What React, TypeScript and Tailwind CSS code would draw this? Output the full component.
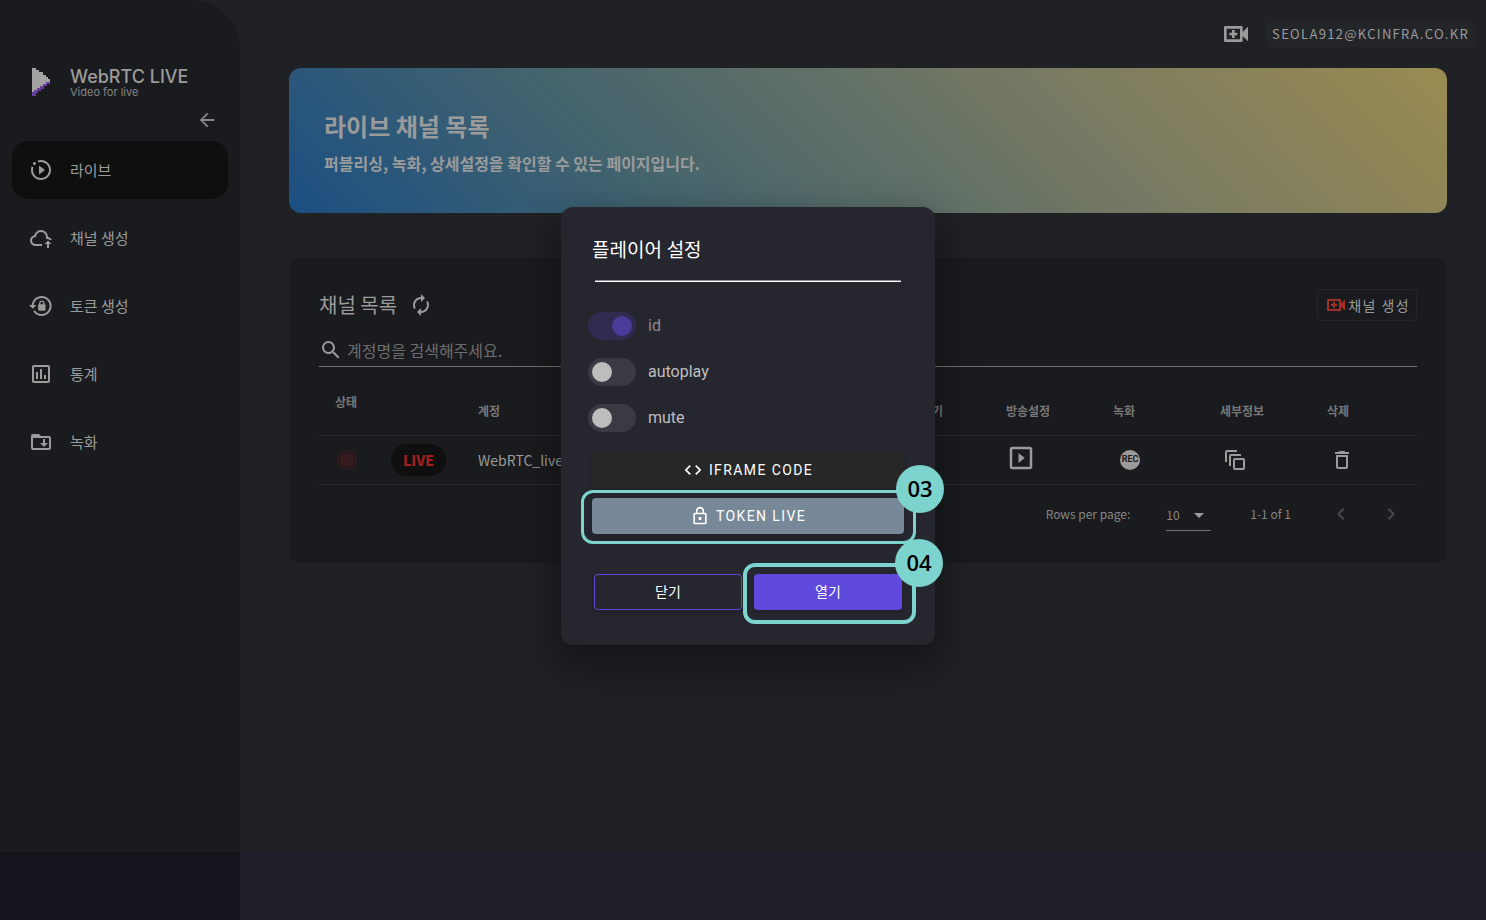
import React, { useState } from 'react';

const icons = {
  live: 'M10 16.5L16 12L10 7.5V16.5M22 12C22 6.46 17.54 2 12 2C10.83 2 9.7 2.19 8.62 2.56L9.32 4.5C10.17 4.16 11.06 3.97 12 3.97C16.41 3.97 20.03 7.59 20.03 12S16.41 20.03 12 20.03 3.97 16.41 3.97 12C3.97 11.06 4.16 10.12 4.5 9.28L2.56 8.62C2.19 9.7 2 10.83 2 12C2 17.54 6.46 22 12 22S22 17.54 22 12M5.47 3.97C6.32 3.97 7 4.68 7 5.47C7 6.32 6.32 7 5.47 7C4.68 7 3.97 6.32 3.97 5.47C3.97 4.68 4.68 3.97 5.47 3.97Z',
  cloud: 'M6.5 20q-2.28 0-3.89-1.57Q1 16.85 1 14.58q0-1.95 1.17-3.48 1.18-1.53 3.08-1.95.63-2.3 2.5-3.72Q9.63 4 12 4q2.93 0 4.96 2.04Q19 8.07 19 11q1.73.2 2.86 1.5 .64.72.92 1.5H20.5q-.6-1-2-1H17v-2q0-2.07-1.46-3.54Q14.08 6 12 6 9.93 6 8.46 7.46 7 8.93 7 11h-.5q-1.45 0-2.47 1.03Q3 13.05 3 14.5q0 1.45 1.03 2.5 1.02 1 2.47 1H13v2zM18 22v-4h-2.5l3.5-3.5 3.5 3.5H20v4z',
  token: 'M12.63,2C18.16,2 22.64,6.5 22.64,12C22.64,17.5 18.16,22 12.63,22C9.12,22 6.05,20.18 4.26,17.43L5.84,16.18C7.25,18.47 9.76,20 12.64,20A8,8 0 0,0 20.64,12A8,8 0 0,0 12.64,4C8.56,4 5.2,7.06 4.71,11H7.47L3.73,14.73L0,11H2.69C3.19,5.95 7.45,2 12.63,2M15.59,10.24C16.09,10.25 16.5,10.65 16.5,11.16V15.77C16.5,16.27 16.09,16.69 15.58,16.69H10.05C9.54,16.69 9.13,16.27 9.13,15.77V11.16C9.13,10.65 9.54,10.25 10.04,10.24V9.23C10.04,7.7 11.29,6.46 12.81,6.46C14.34,6.46 15.59,7.7 15.59,9.23V10.24M12.81,7.86C12.06,7.86 11.44,8.47 11.44,9.23V10.24H14.19V9.23C14.19,8.47 13.57,7.86 12.81,7.86Z',
  stats: 'M9 17H7V10H9V17M13 17H11V7H13V17M17 17H15V13H17V17M19 19H5V5H19V19.1M19 3H5C3.9 3 3 3.9 3 5V19C3 20.1 3.9 21 5 21H19C20.1 21 21 20.1 21 19V5C21 3.9 20.1 3 19 3Z',
  folder: 'M22 8V18A2 2 0 0 1 20 20H4A2 2 0 0 1 2 18V6A2 2 0 0 1 4 4H10L12 6H20A2 2 0 0 1 22 8M20 8H4V18H20ZM14 9V13H11L15 17L19 13H16V9Z',
  back: 'M20,11V13H8L13.5,18.5L12.08,19.92L4.16,12L12.08,4.08L13.5,5.5L8,11H20Z',
  videoPlus: 'M17 10.5V7a1 1 0 0 0-1-1H4a1 1 0 0 0-1 1v10a1 1 0 0 0 1 1h12a1 1 0 0 0 1-1v-3.5l4 4v-11zM15 16H5V8h10zM9 15h2v-2h2v-2h-2V9H9v2H7v2h2z',
  refresh: 'M12,6V9L16,5L12,1V4A8,8 0 0,0 4,12C4,13.57 4.46,15.03 5.24,16.26L6.7,14.8C6.25,13.97 6,13 6,12A6,6 0 0,1 12,6M18.76,7.74L17.3,9.2C17.74,10.04 18,11 18,12A6,6 0 0,1 12,18V15L8,19L12,23V20A8,8 0 0,0 20,12C20,10.43 19.54,8.97 18.76,7.74Z',
  search: 'M9.5,3A6.5,6.5 0 0,1 16,9.5C16,11.11 15.41,12.59 14.44,13.73L14.71,14H15.5L20.5,19L19,20.5L14,15.5V14.71L13.73,14.44C12.59,15.41 11.11,16 9.5,16A6.5,6.5 0 0,1 3,9.5A6.5,6.5 0 0,1 9.5,3M9.5,5C7,5 5,7 5,9.5C5,12 7,14 9.5,14C12,14 14,12 14,9.5C14,7 12,5 9.5,5Z',
  playBox: 'M19,19H5V5H19M19,3H5A2,2 0 0,0 3,5V19A2,2 0 0,0 5,21H19A2,2 0 0,0 21,19V5A2,2 0 0,0 19,3M10,8V16L15,12Z',
  copies: 'M20 12V20H12V12H20M20 10H12A2 2 0 0 0 10 12V20A2 2 0 0 0 12 22H20A2 2 0 0 0 22 20V12A2 2 0 0 0 20 10M18 8V6H8A2 2 0 0 0 6 8V18H8V8H18M14 4V2H4A2 2 0 0 0 2 4V14H4V4H14Z',
  trash: 'M6,19A2,2 0 0,0 8,21H16A2,2 0 0,0 18,19V7H6V19M8,9H16V19H8V9M15.5,4L14.5,3H9.5L8.5,4H5V6H19V4H15.5Z',
  prev: 'M15.41,16.58L10.83,12L15.41,7.41L14,6L8,12L14,18L15.41,16.58Z',
  next: 'M8.59,16.58L13.17,12L8.59,7.41L10,6L16,12L10,18L8.59,16.58Z',
  down: 'M7,10L12,15L17,10H7Z',
  code: 'M14.6,16.6L19.2,12L14.6,7.4L16,6L22,12L16,18L14.6,16.6M9.4,16.6L4.8,12L9.4,7.4L8,6L2,12L8,18L9.4,16.6Z',
  lock: 'M12,17A2,2 0 0,1 10,15A2,2 0 0,1 12,13A2,2 0 0,1 14,15A2,2 0 0,1 12,17M18,20V10H6V20H18M18,8A2,2 0 0,1 20,10V20A2,2 0 0,1 18,22H6C4.89,22 4,21.1 4,20V10C4,8.89 4.89,8 6,8H7V6A5,5 0 0,1 12,1A5,5 0 0,1 17,6V8H18M12,3A3,3 0 0,0 9,6V8H15V6A3,3 0 0,0 12,3Z',
};

function Icon({ name, className = 'size-6' }: { name: keyof typeof icons; className?: string }) {
  return (
    <svg viewBox="0 0 24 24" fill="currentColor" fillRule="evenodd" aria-hidden="true" className={`shrink-0 ${className}`}>
      <path d={icons[name]} />
    </svg>
  );
}

const menu: { label: string; icon: keyof typeof icons }[] = [
  { label: '라이브', icon: 'live' },
  { label: '채널 생성', icon: 'cloud' },
  { label: '토큰 생성', icon: 'token' },
  { label: '통계', icon: 'stats' },
  { label: '녹화', icon: 'folder' },
];

function Logo() {
  return (
    <svg viewBox="0 0 18 28" shapeRendering="crispEdges" aria-hidden="true" className="w-[18px] h-7">
      <path fill="#a3a3a3" d="M0 0h4v2h3v2h4v3h3v2h2v2h2v3h-4v2h-3v2H8v2H5v2H2v2H0z" />
      <path fill="#6a3da0" d="M14 14h4v2h-3v2h-3v2.5H9V23H6v2H4v2.5H0V24h2v-2h3v-2h3v-2h3v-2h3z" />
    </svg>
  );
}

function Sidebar() {
  return (
    <aside className="w-60 shrink-0 bg-[#1a1b1e] rounded-tr-[50px] px-3 pt-[68px] text-[#9b9b9b]">
      <div className="flex gap-5 pl-5">
        <Logo />
        <div className="font-['Inter']">
          <div className="text-lg leading-[17px] font-medium">WebRTC LIVE</div>
          <div className="text-[11px] leading-[14px] text-[#858585]">Video for live</div>
        </div>
      </div>
      <div className="flex justify-end pt-2.5 pr-2.5">
        <button aria-label="메뉴 접기" className="text-[#858585]">
          <Icon name="back" className="block size-[22px]" />
        </button>
      </div>
      <nav className="mt-2.5 flex flex-col gap-2.5">
        {menu.map((item, i) => (
          <a
            key={item.label}
            href="#"
            className={`flex h-[58px] items-center gap-[17px] rounded-2xl pl-[17px] text-[15px] ${i === 0 ? 'bg-[#0f0f0f]' : ''}`}
          >
            <Icon name={item.icon} />
            {item.label}
          </a>
        ))}
      </nav>
    </aside>
  );
}

function ChannelTable() {
  return (
    <table className="w-full table-fixed text-left">
      <colgroup>
        <col className="w-[72px]" />
        <col className="w-[71px]" />
        <col />
        <col className="w-[107px]" />
        <col className="w-[107px]" />
        <col className="w-[107px]" />
        <col className="w-[107px]" />
        <col className="w-[106px]" />
      </colgroup>
      <thead>
        <tr className="h-12 border-b border-[#2b2c2f] text-xs text-[#787878]">
          <th className="pl-4 pb-[18px]">상태</th>
          <th />
          <th className="pl-4">계정</th>
          <th className="pl-4">미리보기</th>
          <th className="pl-4">방송설정</th>
          <th className="pl-4">녹화</th>
          <th className="pl-4">세부정보</th>
          <th className="pl-4">삭제</th>
        </tr>
      </thead>
      <tbody>
        <tr className="h-[49px] border-b border-[#2b2c2f] text-sm">
          <td className="pl-4">
            <svg viewBox="0 0 24 24" className="size-6" aria-label="방송중">
              <circle cx="12" cy="12" r="9" fill="none" stroke="#351b1e" strokeWidth="2" />
              <circle cx="12" cy="12" r="7" fill="#351b1e" />
            </svg>
          </td>
          <td>
            <span className="flex h-8 w-[55px] items-center justify-center rounded-full bg-[#0f0f0f] font-black text-[#a01f1f]">LIVE</span>
          </td>
          <td className="pl-4">WebRTC_live1</td>
          <td className="pl-4" />
          <td className="pl-4">
            <button aria-label="방송설정" className="mb-1 block">
              <Icon name="playBox" className="size-[30px]" />
            </button>
          </td>
          <td className="pl-4">
            <button className="ml-[7px] flex size-5 items-center justify-center rounded-full bg-[#9b9b9b] font-['Roboto'] text-[9px] font-bold text-[#1a1b1e]">
              REC
            </button>
          </td>
          <td className="pl-4">
            <button aria-label="세부정보" className="block ml-[3px]">
              <Icon name="copies" />
            </button>
          </td>
          <td className="pl-4">
            <button aria-label="삭제" className="block ml-[3px]">
              <Icon name="trash" />
            </button>
          </td>
        </tr>
      </tbody>
    </table>
  );
}

function ChannelCard() {
  return (
    <section className="mt-[45px] rounded-xl bg-[#1a1b1e] px-[30px] pt-[31px] pb-5">
      <div className="flex items-center justify-between">
        <div className="flex items-center gap-3">
          <h2 className="text-xl leading-8">채널 목록</h2>
          <button aria-label="새로고침">
            <Icon name="refresh" className="block size-6" />
          </button>
        </div>
        <button className="flex h-8 items-center rounded border border-[#26272a] px-1.5 text-sm tracking-widest">
          <Icon name="videoPlus" className="size-6 text-[#a03028]" />
          채널 생성
        </button>
      </div>
      <label className="mt-3 flex h-[34px] items-center gap-1 border-b border-[#727270]">
        <Icon name="search" />
        <input
          aria-label="계정명 검색"
          placeholder="계정명을 검색해주세요."
          className="min-w-0 flex-1 bg-transparent text-base outline-none placeholder:text-[#6d6d6d]"
        />
      </label>
      <div className="mt-5">
        <ChannelTable />
      </div>
      <div className="flex h-[58px] items-center justify-end pr-3.5 text-xs text-[#858585]">
        <label htmlFor="rows">Rows per page:</label>
        <div className="relative ml-9 mt-[3px] flex h-8 w-[45px] items-center border-b border-[#727270]">
          <select id="rows" className="w-full appearance-none bg-transparent outline-none">
            <option>10</option>
          </select>
          <Icon name="down" className="pointer-events-none absolute right-0 size-6 text-[#9b9b9b]" />
        </div>
        <span className="ml-[39px]">1-1 of 1</span>
        <button aria-label="이전" className="ml-[38px] text-[#48494b]">
          <Icon name="prev" />
        </button>
        <button aria-label="다음" className="ml-[26px] text-[#48494b]">
          <Icon name="next" />
        </button>
      </div>
    </section>
  );
}

function Toggle({ label, defaultChecked, disabled }: { label: string; defaultChecked?: boolean; disabled?: boolean }) {
  return (
    <label className={`flex h-7 items-center gap-3 ${disabled ? 'text-[#8a8a8e]' : 'text-[#bdbdbf]'}`}>
      <input
        type="checkbox"
        role="switch"
        defaultChecked={defaultChecked}
        disabled={disabled}
        className="flex h-7 w-12 appearance-none items-center rounded-full bg-[#3a3a42] p-1 before:size-5 before:rounded-full before:bg-[#bdbdbd] checked:justify-end checked:bg-[#312b50] checked:before:bg-[#4b3a9a]"
      />
      {label}
    </label>
  );
}

// numbered highlight drawn around a button
function Callout({ step, className }: { step: string; className: string }) {
  return (
    <div className={`pointer-events-none absolute rounded-xl border-[#7dd3ce] ${className}`}>
      <span className="absolute -top-7 -right-[31px] z-10 flex size-12 items-center justify-center rounded-full bg-[#7dd3ce] font-['Open_Sans'] text-[22px] font-semibold tracking-normal text-black">
        {step}
      </span>
    </div>
  );
}

function PlayerDialog() {
  const [open, setOpen] = useState(true);
  if (!open) return null;

  return (
    <div className="absolute inset-0 flex items-center justify-center pl-2.5">
      <div
        role="dialog"
        aria-label="플레이어 설정"
        className="w-[374px] rounded-xl bg-[#26262f] px-[31px] pt-7 pb-[35px] font-['Roboto','Noto_Sans_CJK_KR',sans-serif] text-white shadow-[0_16px_36px_6px_rgba(0,0,0,0.35)]"
      >
        <h2 className="text-[19px] leading-8">플레이어 설정</h2>
        <hr className="mx-[3px] mt-[13px] h-0.5 border-t border-b border-t-[#8c8c90] border-b-white" />
        <div className="mt-[30px] -ml-1 flex flex-col gap-[18px]">
          <Toggle label="id" defaultChecked disabled />
          <Toggle label="autoplay" />
          <Toggle label="mute" />
        </div>
        <div className="mt-5 flex flex-col gap-2.5 text-sm tracking-widest">
          <button className="flex h-9 items-center justify-center gap-1.5 rounded bg-[#272727] shadow-md">
            <Icon name="code" className="size-5" />
            IFRAME CODE
          </button>
          <div className="relative">
            <button className="flex h-9 w-full items-center justify-center gap-1.5 rounded bg-[#778899] shadow-md">
              <Icon name="lock" className="size-5" />
              TOKEN LIVE
            </button>
            <Callout step="03" className="-top-2 -right-3 -bottom-2.5 -left-[11px] border-3" />
          </div>
        </div>
        <div className="mx-0.5 mt-10 grid grid-cols-2 gap-3 text-sm">
          <button onClick={() => setOpen(false)} className="h-9 rounded border border-[#5f48dc] shadow-md">
            닫기
          </button>
          <div className="relative">
            <button className="h-9 w-full rounded bg-[#5f48dc] shadow-md">열기</button>
            <Callout step="04" className="-top-[11px] -right-3.5 -bottom-3.5 -left-[11px] border-4" />
          </div>
        </div>
      </div>
    </div>
  );
}

export default function App() {
  return (
    <div className="flex min-h-screen flex-col bg-[#1f2124] font-['Noto_Sans_CJK_KR',sans-serif] text-[#9b9b9b]">
      <div className="relative flex flex-1">
        <Sidebar />
        <main className="min-w-0 flex-1 pr-[39px] pl-[49px]">
          <header className="-mr-7 flex h-[68px] items-center justify-end gap-3.5">
            <button aria-label="채널 추가">
              <Icon name="videoPlus" className="block size-8" />
            </button>
            <button className="h-[25px] rounded bg-[#242529] px-1.5 text-[13px] tracking-widest">SEOLA912@KCINFRA.CO.KR</button>
          </header>
          <section className="rounded-xl bg-[linear-gradient(45deg,#1b4f82,#44646d_30%,#787a62_68%,#9a8b50)] px-[35px] pt-10 pb-[38px]">
            <h1 className="text-2xl leading-9 font-bold">라이브 채널 목록</h1>
            <p className="mt-[7px] text-base font-bold">퍼블리싱, 녹화, 상세설정을 확인할 수 있는 페이지입니다.</p>
          </section>
          <ChannelCard />
        </main>
        <PlayerDialog />
      </div>
      <footer className="flex h-[68px] bg-[#20202a]">
        <div className="w-60 bg-[#14141d]" />
      </footer>
    </div>
  );
}
